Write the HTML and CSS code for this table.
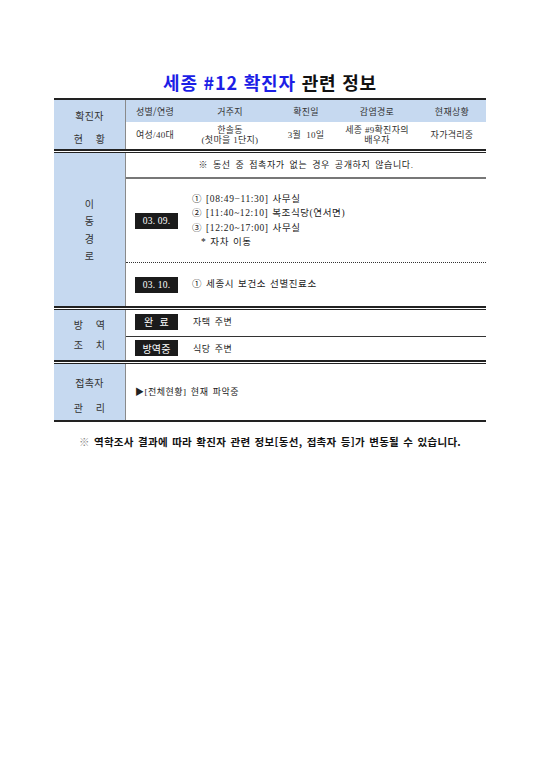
FILE: index.html
```html
<!DOCTYPE html>
<html lang="ko">
<head>
<meta charset="utf-8">
<title>세종 #12 확진자 관련 정보</title>
<link rel="stylesheet" href="styles.css">
</head>
<body>
<div class="page">
  <h1 class="title"><span class="blue">세종 #12 확진자</span> 관련 정보</h1>

  <div class="table">
    <section class="sec sec1">
      <div class="label lab1"><p>확진자</p><p>현&nbsp;&nbsp;&nbsp;&nbsp;황</p></div>
      <div class="content">
        <div class="cols head">
          <div>성별/연령</div><div>거주지</div><div>확진일</div><div>감염경로</div><div>현재상황</div>
        </div>
        <div class="cols data">
          <div>여성/40대</div>
          <div class="two">한솔동<br>(첫마을 1단지)</div>
          <div>3월&nbsp; 10일</div>
          <div class="two">세종 #9확진자의<br>배우자</div>
          <div>자가격리중</div>
        </div>
      </div>
    </section>

    <div class="sep"></div>

    <section class="sec sec2">
      <div class="label lab2"><p>이</p><p>동</p><p>경</p><p>로</p></div>
      <div class="content">
        <div class="notice">※ 동선 중 접촉자가 없는 경우 공개하지 않습니다.</div>
        <div class="day day1">
          <span class="box">03. 09.</span>
          <ul class="moves">
            <li>① [08:49−11:30] 사무실</li>
            <li>② [11:40~12:10] 복조식당(연서면)</li>
            <li>③ [12:20~17:00] 사무실</li>
            <li class="sub">* 자차 이동</li>
          </ul>
        </div>
        <div class="day day2">
          <span class="box">03. 10.</span>
          <ul class="moves">
            <li>① 세종시 보건소 선별진료소</li>
          </ul>
        </div>
      </div>
    </section>

    <div class="sep"></div>

    <section class="sec sec3">
      <div class="label lab3"><p>방&nbsp;&nbsp;&nbsp;&nbsp;역</p><p>조&nbsp;&nbsp;&nbsp;&nbsp;치</p></div>
      <div class="content">
        <div class="qrow first"><span class="box">완&nbsp; 료</span><span class="qtext">자택 주변</span></div>
        <div class="qrow"><span class="box">방역중</span><span class="qtext">식당 주변</span></div>
      </div>
    </section>

    <div class="sep"></div>

    <section class="sec sec4">
      <div class="label lab4"><p>접촉자</p><p>관&nbsp;&nbsp;&nbsp;&nbsp;리</p></div>
      <div class="content contact">▶[전체현황] 현재 파악중</div>
    </section>
  </div>

  <p class="footnote"><span class="mark">※</span> 역학조사 결과에 따라 확진자 관련 정보[동선, 접촉자 등]가 변동될 수 있습니다.</p>
</div>
</body>
</html>
```

FILE: styles.css
```css
* { box-sizing: border-box; }

html, body {
  margin: 0;
  padding: 0;
  background: #ffffff;
}

body {
  font-family: "Liberation Serif", "Noto Sans CJK KR", serif;
  color: #222;
  font-size: 9px;
  letter-spacing: 0.3px;
}

.page {
  width: 540px;
  padding: 0 54px;
}

.title {
  margin: 70px 0 4px;
  height: 24px;
  line-height: 24px;
  text-align: center;
  font-family: "Noto Sans CJK KR", sans-serif;
  font-size: 18px;
  font-weight: 700;
  color: #111;
  letter-spacing: 0.8px;
}

.title .blue { color: #1c1ee6; }

.table {
  border-top: 2px solid #222;
  border-bottom: 2px solid #222;
}

.sec {
  display: grid;
  grid-template-columns: 72px 1fr;
}

.sep {
  height: 4px;
  border-top: 2px solid #222;
  border-bottom: 1px solid #222;
}

.label {
  background: #c6d9f0;
  border-right: 1px solid #8a8a8a;
  display: flex;
  flex-direction: column;
  align-items: center;
  justify-content: center;
  font-family: "Noto Sans CJK KR", sans-serif;
  font-size: 10px;
  color: #333;
}

.label p { margin: 0; }

.lab1 { gap: 8px; padding-top: 5px; }
.lab1 p { line-height: 15px; }
.lab2 p { line-height: 17.5px; }
.lab3 p { line-height: 20px; }
.lab4 { gap: 10px; padding-top: 6px; }
.lab4 p { line-height: 15px; }

/* section 1 */
.sec1 { height: 49px; }

.cols {
  display: grid;
  grid-template-columns: 58px 92px 60px 82px 68px;
  align-items: center;
  text-align: center;
}

.head {
  height: 22px;
  background: #c6d9f0;
  font-family: "Noto Sans CJK KR", sans-serif;
  color: #333;
  padding-top: 1px;
}

.data {
  height: 27px;
  line-height: 9.5px;
  color: #333;
}

/* section 2 */
.sec2 { height: 153px; }

.sec2 .content {
  display: flex;
  flex-direction: column;
}

.notice {
  height: 26px;
  border-bottom: 2px solid #777;
  display: flex;
  align-items: center;
  justify-content: center;
  letter-spacing: 0.6px;
  word-spacing: 2px;
  padding-bottom: 1px;
}

.day {
  display: flex;
  align-items: center;
  padding-left: 9px;
  gap: 14px;
}

.day1 {
  height: 84px;
  border-bottom: 1px dotted #333;
}

.day2 { flex: 1; }

.box {
  display: inline-flex;
  align-items: center;
  justify-content: center;
  width: 43px;
  height: 16px;
  background: #1b1b1b;
  color: #fff;
  font-size: 9.5px;
  letter-spacing: 0.2px;
  flex-shrink: 0;
}

.moves {
  list-style: none;
  margin: 0;
  padding: 0;
}

.moves li {
  font-size: 9.5px;
  line-height: 14.3px;
  letter-spacing: 0.6px;
  word-spacing: 1px;
}

.moves li.sub { padding-left: 9px; }

/* section 3 */
.sec3 { height: 50px; }

.sec3 .content {
  display: flex;
  flex-direction: column;
}

.qrow {
  flex: 1;
  display: flex;
  align-items: center;
  padding-left: 9px;
  gap: 15px;
}

.qrow.first {
  border-bottom: 1px solid #333;
  padding-bottom: 2px;
}

.qrow .box {
  font-family: "Noto Sans CJK KR", sans-serif;
  font-size: 10px;
  width: 43px;
  height: 16px;
}

.qtext { word-spacing: 1.5px; letter-spacing: 0.5px; }

/* section 4 */
.sec4 { height: 56px; }

.contact {
  display: flex;
  align-items: center;
  padding-left: 9px;
  padding-bottom: 2px;
  letter-spacing: 0.5px;
  word-spacing: 1.5px;
}

.footnote {
  margin: 13px 0 0;
  text-align: center;
  font-family: "Noto Sans CJK KR", sans-serif;
  font-weight: 700;
  font-size: 10.5px;
  line-height: 14px;
  color: #111;
  letter-spacing: 0.3px;
  word-spacing: 1px;
}

.footnote .mark {
  color: #888;
  font-weight: 400;
}
```
